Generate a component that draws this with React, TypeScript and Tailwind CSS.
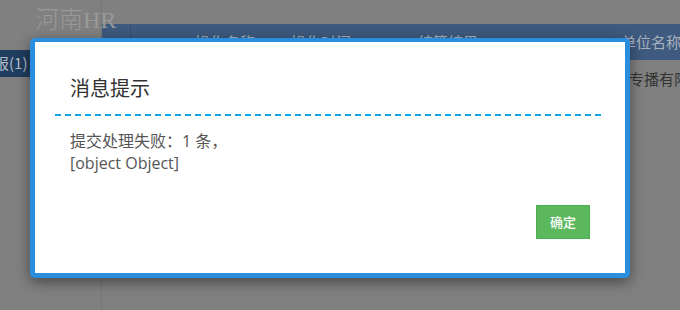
import React from "react";

const CJK = "font-['Microsoft_YaHei','Noto_Sans_CJK_SC',sans-serif]";
const BODY = "font-['Open_Sans','Noto_Sans_CJK_SC',sans-serif]";

function Backdrop() {
  return (
    <div className="flex h-full w-full">
      {/* left column: logo + menu */}
      <div className="relative z-10 w-[102px] shrink-0 border-r border-[#777777] flex flex-col">
        <div className="h-[50px] pl-[35px] pt-[6px] text-[24px] leading-[28px] font-light text-[#999999] font-['Liberation_Serif','Noto_Sans_CJK_SC',serif] whitespace-nowrap">
          河南HR
        </div>
        <div className="h-[27px] bg-[#1f3d5f] flex items-center overflow-hidden">
          <span className={`shrink-0 -ml-[6px] text-[15px] text-[#b4bcc6] whitespace-nowrap ${CJK}`}>报(1)</span>
        </div>
      </div>

      {/* right column: table */}
      <div className="flex-1 min-w-0 pt-[24px] overflow-hidden">
        <div className={`h-[36px] bg-[#3e5a7e] flex items-center text-[15px] text-[#a8b2bf] whitespace-nowrap ${CJK}`}>
          <div className="w-[29px] shrink-0 h-full border-r border-[#354e6e]" />
          <div className="w-[160px] shrink-0 pl-[64px]">操作名称</div>
          <div className="w-[120px] shrink-0">操作时间</div>
          <div className="w-[210px] shrink-0 pl-[7px]">结算结果</div>
          <div className="shrink-0">单位名称</div>
        </div>
        <div className={`h-[38px] flex items-center text-[15px] text-[#333333] whitespace-nowrap ${CJK}`}>
          <div className="w-[527px] shrink-0" />
          <div className="shrink-0">专播有限公司</div>
        </div>
      </div>
    </div>
  );
}

function Dialog() {
  return (
    <div className="absolute z-20 left-[30px] top-[38px] w-[600px] h-[240px] bg-white border-[5px] border-t-4 border-[#2a8edf] rounded-[5px] shadow-[0_4px_14px_rgba(0,0,0,0.45)] flex flex-col">
      <div className="mx-5 pt-[34px] pb-[12px] pl-[15px]">
        <h3 className={`text-[20px] leading-[26px] text-[#333333] ${BODY}`}>消息提示</h3>
      </div>
      <div className="mx-5 h-[2px] bg-[repeating-linear-gradient(90deg,#13a3e6_0px,#13a3e6_6px,transparent_6px,transparent_10px)]" />
      <div className={`mx-5 pt-[14px] pl-[15px] text-[16px] leading-[22px] text-[#555555] ${BODY}`}>
        <p>提交处理失败：1 条，</p>
        <p>[object Object]</p>
      </div>
      <div className="flex justify-end pr-[35px] mt-[31px]">
        <button className={`w-[54px] h-[34px] bg-[#5cb85c] border border-[#4cae4c] text-white text-[13px] font-medium ${CJK}`}>
          确定
        </button>
      </div>
    </div>
  );
}

export default function App() {
  return (
    <div className="relative w-[680px] h-[310px] bg-[#808080] overflow-hidden">
      <Backdrop />
      <Dialog />
    </div>
  );
}
